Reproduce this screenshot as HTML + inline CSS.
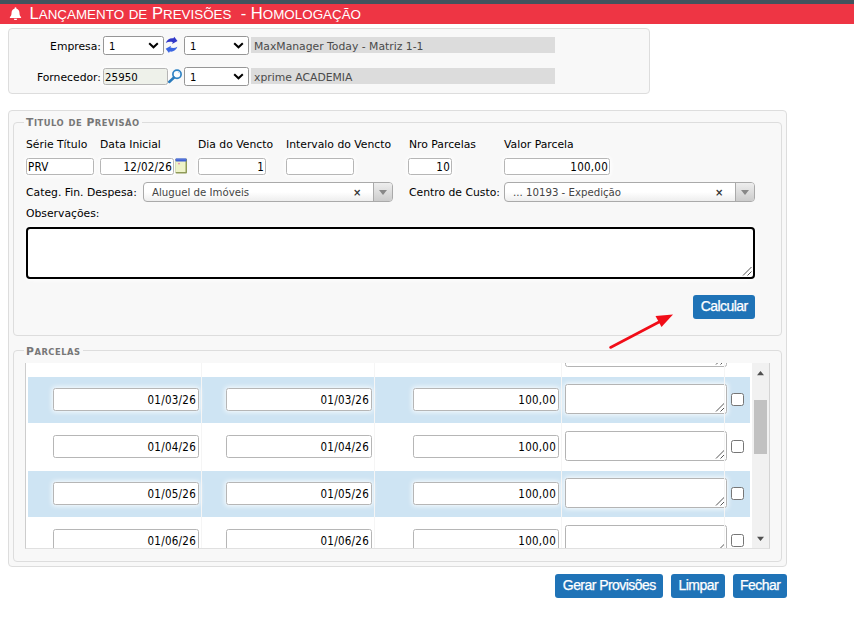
<!DOCTYPE html>
<html lang="pt-br">
<head>
<meta charset="utf-8">
<title>Lançamento de Previsões</title>
<style>
*{box-sizing:border-box;margin:0;padding:0}
html,body{width:854px;height:643px;overflow:hidden;background:#fff}
body{position:relative;font-family:"DejaVu Sans","Liberation Sans",sans-serif;font-size:10.8px;color:#000}
.inp,.ci{font-family:"DejaVu Sans Condensed","DejaVu Sans",sans-serif}
.abs{position:absolute}
#topbar{left:0;top:0;width:854px;height:4px;background:#42535d}
#titlebar{left:0;top:4px;width:854px;height:20px;background:#ee3544}
#title{left:29.5px;top:4px;height:20px;line-height:20px;color:#fff;font-family:"Liberation Sans",sans-serif;font-size:13.4px;white-space:pre}
#title b{font-weight:normal;font-size:16.6px}
#title i{font-style:normal;text-transform:uppercase}
.fs{border:1px solid #ddd;border-radius:4px;background:#f8f8f8}
.lbl{white-space:nowrap;line-height:14px;height:14px}
.inp{background:#fff;border:1px solid #b6b6b6;border-radius:2.5px;box-shadow:0 0 4px 1px #fff;height:17px;line-height:16px;font-size:11.5px;letter-spacing:0.25px;padding:0 1px 0 1px;white-space:nowrap;overflow:hidden}
.r{text-align:right}
.sel{background:#fff;border:1px solid #969696;border-radius:2.5px;height:19px;line-height:19px;padding-left:5px;font-size:10px}
.gray{background:#dcdcdc;height:16px;line-height:20px;color:#4a4a4a;padding-left:3px;overflow:hidden}
.legend{font-family:"DejaVu Sans","Liberation Sans",sans-serif;font-weight:bold;color:#777;background:#f8f8f8;font-size:8.4px;letter-spacing:0.5px;line-height:12px;height:12px;white-space:nowrap;padding:0 2px}
.legend b{font-size:10.8px}
.legend i{font-style:normal;text-transform:uppercase}
.s2{border:1px solid #aaa;border-radius:4px;height:20px;background:linear-gradient(#fff 50%,#eee);font-family:'DejaVu Sans',sans-serif;font-size:10.2px;color:#444;line-height:19px;padding-left:8px}
.s2 .arr{position:absolute;right:0;top:0;width:19px;height:18px;border-left:1px solid #aaa;border-radius:0 3px 3px 0;background:linear-gradient(#eee,#ccc)}
.s2 .arr:after{content:"";position:absolute;left:5px;top:7px;border:4px solid transparent;border-top:5px solid #888;border-bottom:0}
.s2 .x{position:absolute;top:0;font-size:10px;font-weight:bold;color:#333}
.btn{background:#1f73b7;color:#fff;border-radius:3px;font-family:"Liberation Sans",sans-serif;font-size:14px;letter-spacing:-0.55px;-webkit-text-stroke:0.25px #fff;height:24px;line-height:22px;text-align:center;white-space:nowrap;padding-left:0.5px}
.row{left:1px;width:722px;height:46px}
.blue{background:#cee4f3}
.ci{font-size:11.5px;letter-spacing:0.25px;background:#fff;border:1px solid #b6b6b6;border-radius:2.5px;height:23px;line-height:22px;text-align:right;padding-right:2px;width:146px;top:11px;box-shadow:0 0 5px 1px rgba(255,255,255,.9);margin-left:-2px}
.ta{background:#fff;border:1px solid #b4b4b4;border-radius:2.5px;height:30px;width:162px;left:537px;top:7px;box-shadow:0 0 5px 1px rgba(255,255,255,.9)}
.grip{position:absolute;right:1px;bottom:1px}
.cb{background:#fff;border:1.5px solid #767676;border-radius:2.5px;width:13px;height:13px;left:703px;top:16px}
.vl{top:0;width:1px;height:185px;background:#f5f5f5}
</style>
</head>
<body>
<div class="abs" id="topbar"></div>
<div class="abs" id="titlebar"></div>
<svg class="abs" style="left:8.600px;top:6.800px" width="13" height="13.500" viewBox="0 0 13 14"><path d="M6.5 0.3c.6 0 1 .4 1 1v.4c2 .5 3.100 2.100 3.100 4.200 0 2.500.7 3.600 1.600 4.400.4.400.1 1.100-.5 1.100H1.300c-.6 0-.9-.7-.5-1.100.9-.8 1.600-1.900 1.600-4.400 0-2.100 1.100-3.700 3.100-4.200v-.4c0-.6.4-1 1-1z" fill="#fff"/><path d="M4.800 12.200h3.400c0 .9-.8 1.600-1.700 1.600s-1.700-.7-1.700-1.600z" fill="#fff"/></svg>
<div class="abs" id="title"><b>L</b><i>ançamento</i><b> </b><i>de</i><b> P</b><i>revisões</i><b>  - H</b><i>omologação</i></div>

<!-- filtro -->
<div class="abs fs" style="left:8px;top:28px;width:642px;height:66px"></div>
<div class="abs lbl r" style="left:20px;top:40px;width:81px">Empresa:</div>
<div class="abs sel" style="left:103px;top:36px;width:61px">1<svg class="abs" style="right:4px;top:4.500px" width="11" height="7" viewBox="0 0 11 7"><path d="M1.200 1.200L5.500 5.300L9.800 1.200" stroke="#000" stroke-width="2" fill="none"/></svg></div>
<div class="abs sel" style="left:184px;top:36px;width:65px">1<svg class="abs" style="right:4px;top:4.500px" width="11" height="7" viewBox="0 0 11 7"><path d="M1.200 1.200L5.500 5.300L9.800 1.200" stroke="#000" stroke-width="2" fill="none"/></svg></div>
<div class="abs gray" style="left:251px;top:37px;width:304px">MaxManager Today - Matriz 1-1</div>
<div class="abs lbl r" style="left:20px;top:71px;width:81px">Fornecedor:</div>
<div class="abs inp" style="left:103px;top:68px;width:65px;background:#eef1ea;border-color:#b5b5b5;line-height:17px;font-size:11.300px;letter-spacing:0.100px">25950</div>
<div class="abs sel" style="left:184px;top:67px;width:65px">1<svg class="abs" style="right:4px;top:4.500px" width="11" height="7" viewBox="0 0 11 7"><path d="M1.200 1.200L5.500 5.300L9.800 1.200" stroke="#000" stroke-width="2" fill="none"/></svg></div>
<div class="abs gray" style="left:251px;top:68px;width:304px">xprime ACADEMIA</div>


<svg class="abs" style="left:162px;top:34px" width="24" height="24" viewBox="0 0 24 24"><path d="M3.800 9C5 5.400 8.300 3.600 11.500 4.300L12.200 2.700L15.500 7L10.100 10.100L10.800 8.200C8.400 7.400 6 7.700 3.800 9Z" fill="#3138c8"/><path d="M3.800 9C5 5.400 8.300 3.600 11.500 4.300L12.200 2.700L15.500 7L10.100 10.100L10.800 8.200C8.400 7.400 6 7.700 3.800 9Z" fill="#3b66e2" transform="rotate(180 9.600 10.900)"/></svg>
<svg class="abs" style="left:167px;top:67px" width="16" height="17" viewBox="0 0 16 17"><circle cx="10" cy="7.300" r="4.100" fill="#fdfdfd" stroke="#2e82c4" stroke-width="1.700"/><path d="M7 10.500L2.200 15" stroke="#2a7bbd" stroke-width="2.500" stroke-linecap="round"/><path d="M11.200 4.800L12.500 6.300" stroke="#9cc6e6" stroke-width="1"/></svg>
<!-- titulo de previsao -->
<div class="abs fs" style="left:8px;top:110px;width:779px;height:457px"></div>
<div class="abs fs" style="left:13px;top:122px;width:769px;height:214px"></div>
<div class="abs legend" style="left:24px;top:117px"><b>T</b><i>itulo</i><b> </b><i>de</i><b> P</b><i>revisão</i></div>

<div class="abs lbl" style="left:26px;top:138px">Série Título</div>
<div class="abs lbl" style="left:100px;top:138px">Data Inicial</div>
<div class="abs lbl" style="left:198px;top:138px">Dia do Vencto</div>
<div class="abs lbl" style="left:286px;top:138px">Intervalo do Vencto</div>
<div class="abs lbl" style="left:409px;top:138px">Nro Parcelas</div>
<div class="abs lbl" style="left:504px;top:138px">Valor Parcela</div>

<div class="abs inp" style="left:26px;top:158px;width:68px">PRV</div>
<div class="abs inp r" style="left:100px;top:158px;width:74px">12/02/26</div>
<div class="abs inp r" style="left:198px;top:158px;width:68px">1</div>
<div class="abs inp" style="left:286px;top:158px;width:68px"></div>
<div class="abs inp r" style="left:408px;top:158px;width:44px">10</div>
<div class="abs inp r" style="left:504px;top:158px;width:106px">100,00</div>

<svg class="abs" style="left:175px;top:158px" width="13" height="16" viewBox="0 0 13 16"><rect x="0.500" y="0.500" width="11.500" height="15" rx="1" fill="#8f9a58"/><rect x="0.500" y="3" width="10" height="11" fill="#eef3c9"/><rect x="0.500" y="0.500" width="11" height="3" rx="0.800" fill="#3f5fd3"/><rect x="1" y="0.300" width="10" height="1" fill="#7f9be8"/><circle cx="4" cy="5.600" r="0.900" fill="#e48ab0"/></svg>
<div class="abs lbl" style="left:26px;top:186px">Categ. Fin. Despesa:</div>
<div class="abs s2" style="left:143px;top:182px;width:250px">Aluguel de Imóveis<span class="x" style="left:209px">×</span><span class="arr"></span></div>
<div class="abs lbl" style="left:409px;top:186px">Centro de Custo:</div>
<div class="abs s2" style="left:504px;top:182px;width:251px">... 10193 - Expedição<span class="x" style="left:210px">×</span><span class="arr"></span></div>

<div class="abs lbl" style="left:26px;top:207px">Observações:</div>
<div class="abs" style="left:26px;top:227px;width:729px;height:52px;background:#fff;border:2px solid #000;border-radius:4px;box-shadow:0 0 4px 1px #fff"><svg class="grip" width="10" height="10" viewBox="0 0 10 10"><path d="M1 9.500L9.500 1M5.500 9.500L9.500 5.500" stroke="#555" stroke-width="1" fill="none"/></svg></div>

<div class="abs btn" style="left:693px;top:295px;width:62px">Calcular</div>

<svg class="abs" style="left:600px;top:305px" width="80" height="50" viewBox="0 0 80 50"><line x1="10.500" y1="42.500" x2="60" y2="16.500" stroke="#f10d18" stroke-width="2.600" stroke-linecap="round"/><polygon points="73,9.500 55.500,11 61.500,22" fill="#f10d18"/></svg>

<!-- parcelas -->
<div class="abs fs" style="left:13px;top:350px;width:769px;height:212px"></div>
<div class="abs legend" style="left:24px;top:346px"><b>P</b><i>arcelas</i></div>
<div class="abs" style="left:25px;top:363px;width:745px;height:186px;background:#fff;border-left:1px solid #cdcdcd;border-right:1px solid #d4d4d4;border-bottom:1px solid #e0e0e0;overflow:hidden">
  <div class="abs" style="left:1px;top:0;width:724px;height:185px;overflow:hidden">
    <div class="abs row" style="top:-33px"><div class="abs ta"><svg class="grip" width="10" height="10" viewBox="0 0 10 10"><path d="M1 9.500L9.500 1M5.500 9.500L9.500 5.500" stroke="#555" stroke-width="1" fill="none"/></svg></div></div>
    <div class="abs row blue" style="top:14px"><div class="abs ci" style="left:27px">01/03/26</div><div class="abs ci" style="left:200px">01/03/26</div><div class="abs ci" style="left:387px">100,00</div><div class="abs ta"><svg class="grip" width="10" height="10" viewBox="0 0 10 10"><path d="M1 9.500L9.500 1M5.500 9.500L9.500 5.500" stroke="#555" stroke-width="1" fill="none"/></svg></div><div class="abs cb"></div></div>
    <div class="abs row" style="top:61px"><div class="abs ci" style="left:27px">01/04/26</div><div class="abs ci" style="left:200px">01/04/26</div><div class="abs ci" style="left:387px">100,00</div><div class="abs ta"><svg class="grip" width="10" height="10" viewBox="0 0 10 10"><path d="M1 9.500L9.500 1M5.500 9.500L9.500 5.500" stroke="#555" stroke-width="1" fill="none"/></svg></div><div class="abs cb"></div></div>
    <div class="abs row blue" style="top:108px"><div class="abs ci" style="left:27px">01/05/26</div><div class="abs ci" style="left:200px">01/05/26</div><div class="abs ci" style="left:387px">100,00</div><div class="abs ta"><svg class="grip" width="10" height="10" viewBox="0 0 10 10"><path d="M1 9.500L9.500 1M5.500 9.500L9.500 5.500" stroke="#555" stroke-width="1" fill="none"/></svg></div><div class="abs cb"></div></div>
    <div class="abs row" style="top:155px"><div class="abs ci" style="left:27px">01/06/26</div><div class="abs ci" style="left:200px">01/06/26</div><div class="abs ci" style="left:387px">100,00</div><div class="abs ta"><svg class="grip" width="10" height="10" viewBox="0 0 10 10"><path d="M1 9.500L9.500 1M5.500 9.500L9.500 5.500" stroke="#555" stroke-width="1" fill="none"/></svg></div><div class="abs cb"></div></div>
    <div class="abs vl" style="left:174px"></div><div class="abs vl" style="left:347px"></div><div class="abs vl" style="left:534px"></div><div class="abs vl" style="left:697px"></div>
  </div>
  <div class="abs" style="left:726px;top:0;width:17px;height:185px;background:#f1f1f1"></div>
  <svg class="abs" style="left:726px;top:0" width="18" height="185" viewBox="0 0 18 185"><path d="M5 12.300h7l-3.500-4.300z M5 173.700h7l-3.500 4.300z" fill="#505050"/><rect x="2" y="37" width="13" height="54" fill="#c1c1c1"/></svg>
</div>

<div class="abs btn" style="left:555px;top:574px;width:108px">Gerar Provisões</div>
<div class="abs btn" style="left:671px;top:574px;width:54px">Limpar</div>
<div class="abs btn" style="left:733px;top:574px;width:54px">Fechar</div>
</body>
</html>
